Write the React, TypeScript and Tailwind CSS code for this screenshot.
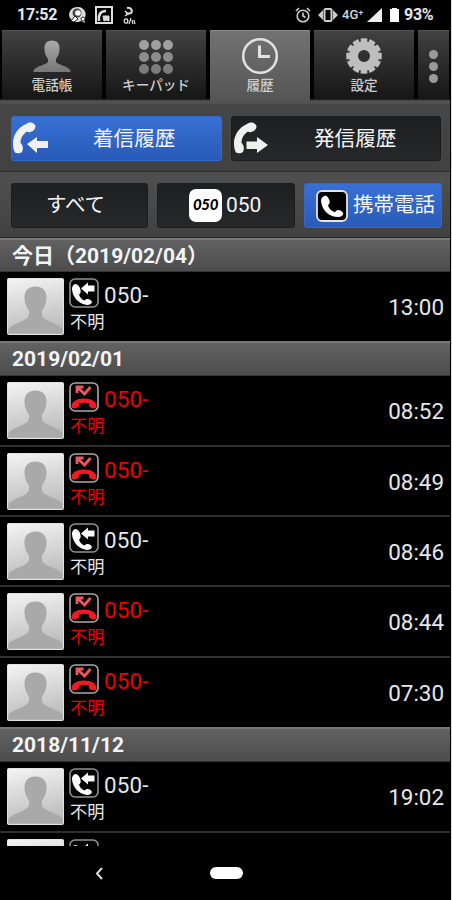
type Call = { time: string; missed?: boolean };

const groups: { date: string; head: string; calls: Call[] }[] = [
  { date: "今日（2019/02/04）", head: "h-[34px]", calls: [{ time: "13:00" }] },
  {
    date: "2019/02/01",
    head: "h-[35px]",
    calls: [
      { time: "08:52", missed: true },
      { time: "08:49", missed: true },
      { time: "08:46" },
      { time: "08:44", missed: true },
      { time: "07:30", missed: true },
    ],
  },
  { date: "2018/11/12", head: "h-[35px]", calls: [{ time: "19:02" }] },
];

function Handset() {
  return (
    <path
      d="M22 2C19-.3 16.500.5 14 2 6 5.500 1 13 1 21c0 4 .5 7 2 9.500 2 1.300 5 1 7-.5C11.500 27 11 23 8.500 21 8.500 16 11 12 15 9.500c1.500 1.500 5 .5 7-1.500 2-2 2-4.500 0-6Z"
      fill="#f0f0ee"
    />
  );
}

function StatusBar() {
  return (
    <div className="flex h-[30px] shrink-0 items-center pl-[17px] pr-[15px] text-[16px] font-bold text-gray-200">
      <span className="w-[41px] tracking-[-0.2px]">17:52</span>
      <svg className="ml-[11px]" width="18" height="18" viewBox="0 0 18 18">
        <path d="M9 1a8 7.500 0 1 0 3 14l4 2-1-4A8 7.500 0 0 0 9 1Z" fill="#ddd" />
        <circle cx="8" cy="7" r="4.500" fill="#444" />
        <circle cx="9" cy="7" r="2.800" fill="#fff" />
        <path d="m2 15 4-5 3 3-4 3Z" fill="#fff" stroke="#222" />
        <circle cx="14" cy="13" r="2" fill="#fff" stroke="#333" />
      </svg>
      <svg className="ml-2" width="18" height="18" viewBox="0 0 18 18" fill="none" stroke="#ddd">
        <rect x="1" y="1" width="16" height="16" strokeWidth="2" />
        <path d="M4 15C3 8 6 5 11 5" strokeWidth="2.500" />
        <path d="M8 10h6v5l-3-1-2 1Z" fill="#ddd" strokeWidth="1" />
      </svg>
      <svg className="ml-[10px]" width="14" height="19" viewBox="0 0 14 19" fill="none" stroke="#ddd">
        <path d="M4 2c4-1 6 3 4 5L3 8" strokeWidth="2" />
        <path d="M2 5l3 3-3 2" strokeWidth="1.500" />
        <ellipse cx="3" cy="15" rx="1.800" ry="2.200" strokeWidth="1.300" />
        <path d="m8 12-2 6M9 14l1 4M11 14l1 4" strokeWidth="1.200" />
      </svg>
      <div className="ml-auto flex items-center">
        <svg width="16" height="17" viewBox="0 0 16 17" fill="none" stroke="#ccc" strokeWidth="1.600">
          <circle cx="8" cy="9" r="5.800" />
          <path d="M8 5.500V9l2.500 1.500M1 4l3-3M15 4l-3-3" />
        </svg>
        <svg className="ml-[7px]" width="20" height="16" viewBox="0 0 20 16">
          <path d="M5 3v10L0 8ZM15 3v10l5-5Z" fill="#ccc" />
          <rect x="6.500" y="2" width="7" height="12" rx="1" fill="none" stroke="#ccc" strokeWidth="2" />
        </svg>
        <span className="ml-1 w-[22px] text-[13px] font-medium whitespace-nowrap text-gray-300">4G⁺</span>
        <svg className="ml-[3px]" width="15" height="14" viewBox="0 0 15 14">
          <path d="M15 0v14H0Z" fill="#eee" />
        </svg>
        <svg className="ml-2" width="9" height="14" viewBox="0 0 9 14">
          <path d="M2 0h5v1h2v13H0V1h2Z" fill="#fff" />
        </svg>
        <span className="ml-[5px] w-[31px] tracking-[-0.3px]">93%</span>
      </div>
    </div>
  );
}

function PersonIcon() {
  return (
    <svg width="38" height="36" viewBox="0 0 38 36">
      <defs>
        <linearGradient id="person" x2="0" y2="1">
          <stop stopColor="#aaa" />
          <stop offset="1" stopColor="#777" />
        </linearGradient>
      </defs>
      <path
        d="M19 2.500c-6 0-8 4-7.500 9.500 .2 4 2 7 3.500 9v3c-2 3-12 4-14.500 8.500V34h37v-1.500c-2.500-4.500-12.500-5.500-14.500-8.500v-3c1.500-2 3.300-5 3.500-9C27 6.500 25 2.500 19 2.500Z"
        fill="url(#person)"
      />
    </svg>
  );
}

function KeypadIcon() {
  return (
    <svg width="38" height="36" viewBox="0 0 38 36">
      {[7, 19, 31].map((x) => (
        <g key={x}>
          <circle cx={x} cy="7" r="5" fill="#a0a0a0" />
          <circle cx={x} cy="19" r="5" fill="#8c8c8c" />
          <circle cx={x} cy="31" r="5" fill="#7c7c7c" />
        </g>
      ))}
    </svg>
  );
}

function ClockIcon() {
  return (
    <svg width="38" height="36" viewBox="0 0 38 36" className="overflow-visible" fill="none" stroke="#e2e2e2">
      <circle cx="19" cy="18" r="16.800" strokeWidth="2.500" />
      <path d="M18.500 7.500V18.500H29" strokeWidth="3" />
    </svg>
  );
}

function GearIcon() {
  return (
    <svg width="38" height="36" viewBox="0 0 38 36" className="overflow-visible">
      <circle cx="19" cy="18" r="11.900" fill="none" stroke="#bebebe" strokeWidth="11.800" />
      {[15, 45, 75, 105, 135, 165, 195, 225, 255, 285, 315, 345].map((a) => (
        <path key={a} d="M17.700-.5h2.600l-.6 3.700h-1.400Z" fill="#303030" transform={`rotate(${a} 19 18)`} />
      ))}
    </svg>
  );
}

const tabs = [
  { label: "電話帳", icon: <PersonIcon /> },
  { label: "キーパッド", icon: <KeypadIcon /> },
  { label: "履歴", icon: <ClockIcon />, active: true },
  { label: "設定", icon: <GearIcon /> },
];

function TabBar() {
  return (
    <div className="flex h-[71px] shrink-0 gap-1 bg-linear-to-b from-black from-95% to-[#555] to-100% pl-[2px]">
      {tabs.map((t) => (
        <div
          key={t.label}
          className={
            t.active
              ? "flex h-[71px] w-[100px] flex-col items-center border-t border-[#888] bg-linear-to-b from-[#737373] to-[#555] pt-[7px]"
              : "flex h-[69px] w-[100px] flex-col items-center border-t border-[#555] bg-linear-to-b from-[#424242] to-[#161616] pt-[7px]"
          }
        >
          {t.icon}
          <span className="mt-[2px] text-[13.6px] leading-[18px] font-medium whitespace-nowrap text-[#ccc]">{t.label}</span>
        </div>
      ))}
      <div className="flex h-[69px] w-[31px] flex-col items-center gap-[3px] border-t border-[#555] bg-linear-to-b from-[#424242] to-[#161616] pt-[19px]">
        <i className="size-[9px] rounded-full bg-[#9a9a9a]" />
        <i className="size-[9px] rounded-full bg-[#9a9a9a]" />
        <i className="size-[9px] rounded-full bg-[#9a9a9a]" />
      </div>
    </div>
  );
}

const blue = "border-[#3469c9] bg-linear-to-b from-[#3970d5] to-[#285bb8]";
const dark = "border-[#1b1c1e] bg-linear-to-b from-[#1d1f21] to-[#26282a]";

function DirectionBar() {
  return (
    <div className="flex h-[70px] shrink-0 gap-[9px] border-t-[3px] border-[#515151] bg-linear-to-b from-[#464646] to-[#414141] pt-[12px] pl-[11px]">
      <div className={`flex h-[45px] w-[211px] items-center rounded-[3px] border ${blue}`}>
        <svg width="37" height="34" viewBox="0 0 37 34" className="mt-[1px]">
          <Handset />
          <path d="m15 22 10-7v4h11v7H25v5Z" fill="#f0f0ee" />
        </svg>
        <span className="ml-[44px] text-[20.6px] leading-6 text-gray-100">着信履歴</span>
      </div>
      <div className={`flex h-[45px] w-[210px] items-center rounded-[3px] border ${dark}`}>
        <svg width="37" height="34" viewBox="0 0 37 34" className="mt-[1px] ml-px">
          <Handset />
          <path d="M13.500 19.500H24v-4.500l11 8-11 8v-4H13.500Z" fill="#f0f0ee" />
        </svg>
        <span className="ml-[44px] text-[20.6px] leading-6 text-gray-100">発信履歴</span>
      </div>
    </div>
  );
}

function LineBar() {
  return (
    <div className="flex h-[67px] shrink-0 gap-[9px] border-t border-b border-t-[#2d2d2d] border-b-[#2b2b2b] bg-linear-to-b from-[#505050] to-[#414141] pt-[11px] pl-[11px] text-[20.5px] text-gray-100">
      <div className={`flex h-[45px] w-[137px] items-center justify-center rounded-[3px] border pr-2 ${dark}`}>すべて</div>
      <div className={`flex h-[45px] w-[138px] items-center rounded-[3px] border ${dark}`}>
        <span className="ml-[31px] flex size-[33px] items-center justify-center rounded-[7px] bg-white pb-[2px] font-['Lato'] text-[15px] font-black tracking-[-0.3px] text-black italic">
          050
        </span>
        <span className="ml-[4px] mt-px text-[21px]">050</span>
      </div>
      <div className={`flex h-[45px] w-[138px] items-center rounded-[3px] border whitespace-nowrap ${blue}`}>
        <svg width="32" height="32" viewBox="0 0 32 32" className="ml-[11px]">
          <rect x="1" y="1" width="30" height="30" rx="5" fill="#000" stroke="#e5e5e5" strokeWidth="1.800" />
          <path
            d="M9.500 5.500C7 6 5 8 5 10.500c.5 9 7.500 16.500 17.500 16.500 2.500 0 4.500-1.500 4.800-3.500-1-2-3-3.500-5-3.500-1.500 0-2.500 1-3.500 2.300C15 21 12.500 18 12 15c1.500-1 2-2.500 1.500-4-.5-2.500-2-5-4-5.500Z"
            fill="#fff"
          />
        </svg>
        <span className="ml-[5px]">携帯電話</span>
      </div>
    </div>
  );
}

function Avatar() {
  return (
    <svg width="57" height="57" viewBox="0 0 57 57" className="shrink-0">
      <defs>
        <linearGradient id="avatar" x2="0.200" y2="1">
          <stop stopColor="#f4f4f4" />
          <stop offset="1" stopColor="#bdbdbd" />
        </linearGradient>
      </defs>
      <rect x=".5" y=".5" width="56" height="56" rx="1" fill="url(#avatar)" stroke="#e2e2e2" />
      <path
        d="M28.500 8.500c-8 0-11.500 5-11 12 .3 5 2 9 4.500 12 .5 4 0 6.500-3 8.500C15 44 5 46 1.500 51v4.500h54V51C52 46 42 44 38 41c-3-2-3.500-4.500-3-8.500 2.500-3 4.200-7 4.500-12 .5-7-3-12-11-12Z"
        fill="#a9a9a9"
      />
    </svg>
  );
}

function CallIcon({ missed }: { missed?: boolean }) {
  return (
    <svg width="30" height="30" viewBox="0 0 30 30" className="shrink-0">
      <rect x="1" y="1" width="28" height="28" rx="5" fill="#050505" stroke={missed ? "#aaa" : "#929292"} strokeWidth="1.600" />
      {missed ? (
        <>
          <path
            d="M2.500 24c0-4 5-7.500 12.500-7.500s12.500 3.500 12.500 7.500c0 1.500-.8 2.500-2 2.500-1.800 0-5-1-5.500-2.500-.3-1 .3-1.500 0-2.500-3-1-7-1-10 0-.3 1 .3 1.500 0 2.500-.5 1.500-3.700 2.500-5.500 2.500-1.200 0-2-1-2-2.500Z"
            fill="#f21a22"
          />
          <path d="M8 11V5H14.500M8.500 5.500l7 6.500 6-7" fill="none" stroke="#f0555f" strokeWidth="2.800" />
        </>
      ) : (
        <>
          <path
            d="M6 6C4 7 3 8.500 3 11c.5 8 6.500 15 15 16 2.500 0 4.500-1 5-3-.8-2-2.500-3-4.500-3-1.500 0-2 .7-3 1.500-3-1-5-3.500-5.500-6C11.500 15.500 12 14 11.500 12c-.5-3-2.500-6-5.500-6Z"
            fill="#fff"
          />
          <path d="m12 10.500 7-6v3h6.500v6H19v3Z" fill="#fff" />
        </>
      )}
    </svg>
  );
}

function CallRow({ time, missed }: Call) {
  return (
    <div className="flex h-[70.4px] shrink-0 items-start border-b-2 border-[#303030] pt-[6px] pr-[6px] pl-[7px] last:border-transparent">
      <Avatar />
      <div className={missed ? "ml-[5px] text-[#f00000]" : "ml-[5px] text-gray-200"}>
        <div className="flex h-[31px] items-start">
          <CallIcon missed={missed} />
          <span className="ml-[5px] mt-[4px] text-[22.4px] leading-[26px] tracking-[0.2px]">050-</span>
        </div>
        <div className="ml-px mt-[3px] text-[17.2px] leading-5">不明</div>
      </div>
      <span className="mt-[16px] ml-auto text-[22.4px] leading-[26px] text-gray-200">{time}</span>
    </div>
  );
}

export default function App() {
  return (
    <div className="h-[900px] w-[452px] overflow-hidden border-r border-[#ddd] bg-black font-[Roboto,'Noto_Sans_CJK_JP',sans-serif]">
      <div className="flex h-[900px] w-[450px] flex-col">
        <StatusBar />
        <TabBar />
        <DirectionBar />
        <LineBar />
        <div className="h-[608px] shrink-0 overflow-hidden">
          {groups.map((g) => (
            <section key={g.date} className="-mb-[1.200px]">
              <h2
                className={`flex items-center border-t-2 border-b border-t-[#777] border-b-[#333] bg-linear-to-b from-[#626262] to-[#4c4c4c] pt-[2px] pl-[12px] text-[21px] font-bold text-gray-100 ${g.head}`}
              >
                {g.date}
              </h2>
              {g.calls.map((c) => (
                <CallRow key={c.time} {...c} />
              ))}
            </section>
          ))}
          <div className="flex items-start gap-[5px] border-t-2 border-[#303030] pt-[6px] pl-[7px]">
            <Avatar />
            <CallIcon />
          </div>
        </div>
        <nav className="flex h-[54px] shrink-0 items-center">
          <svg width="8" height="13" viewBox="0 0 8 13" className="ml-[95px]" fill="none" stroke="#ddd" strokeWidth="2">
            <path d="m7 1-5 5.500L7 12" />
          </svg>
          <div className="ml-[107px] h-[12px] w-[33px] rounded-full bg-white" />
        </nav>
      </div>
    </div>
  );
}
